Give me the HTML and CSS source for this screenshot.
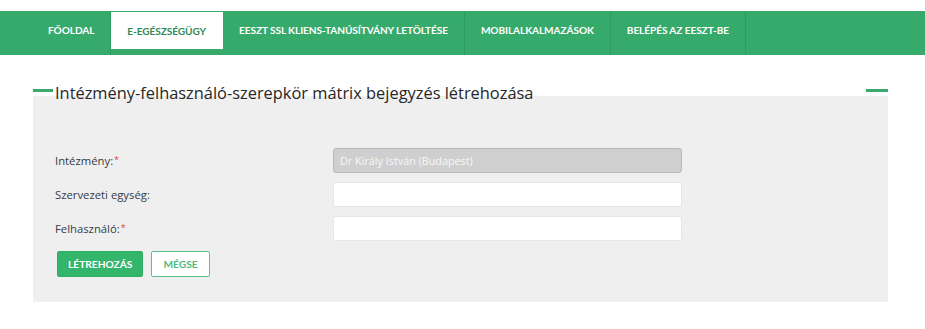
FILE: index.html
```html
<!DOCTYPE html>
<html lang="hu">
<head>
<meta charset="utf-8">
<title>Intézmény-felhasználó-szerepkör mátrix</title>
<link rel="stylesheet" href="styles.css">
</head>
<body>
<nav class="topnav">
  <ul class="menu">
    <li class="item">FŐOLDAL</li>
    <li class="item active">E-EGÉSZSÉGÜGY</li>
    <li class="item">EESZT SSL KLIENS-TANÚSÍTVÁNY LETÖLTÉSE</li>
    <li class="item">MOBILALKALMAZÁSOK</li>
    <li class="item">BELÉPÉS AZ EESZT-BE</li>
  </ul>
</nav>
<main class="panel">
  <div class="panel-head">
    <span class="rule rule-left"></span>
    <h1 class="title">Intézmény-felhasználó-szerepkör mátrix bejegyzés létrehozása</h1>
    <span class="spacer"></span>
    <span class="rule rule-right"></span>
  </div>
  <form class="form">
    <div class="row">
      <label class="label">Intézmény:<span class="req">*</span></label>
      <input class="field disabled" type="text" value="Dr Király István (Budapest)" disabled>
    </div>
    <div class="row">
      <label class="label">Szervezeti egység:</label>
      <input class="field" type="text">
    </div>
    <div class="row">
      <label class="label">Felhasználó:<span class="req">*</span></label>
      <input class="field" type="text">
    </div>
    <div class="actions">
      <button class="btn btn-primary" type="button">LÉTREHOZÁS</button>
      <button class="btn btn-outline" type="button">MÉGSE</button>
    </div>
  </form>
</main>
</body>
</html>
```
FILE: styles.css
```css
html, body {
  margin: 0;
  padding: 0;
  background: #ffffff;
}
body {
  font-family: "Open Sans", "DejaVu Sans", sans-serif;
  color: #333333;
}
.topnav {
  margin-top: 11px;
  height: 44px;
  background: #36aa6a;
}
.menu {
  list-style: none;
  margin: 0;
  padding: 0 0 0 32px;
  display: flex;
  height: 100%;
}
.item {
  display: flex;
  align-items: center;
  padding: 0 16px 6px;
  height: 100%;
  box-sizing: border-box;
  border-right: 1px solid #2f9b5e;
  color: #ffffff;
  font-family: Lato, "Open Sans", sans-serif;
  font-weight: 700;
  font-size: 10.1px;
  letter-spacing: -0.08px;
  white-space: nowrap;
}
.item.active {
  background: #ffffff;
  color: #2f8a58;
  border-right-color: #ffffff;
  margin-top: 1px;
  height: 37px;
  padding-bottom: 0;
}
.panel {
  margin: 25px 37px 0 33px;
  background: linear-gradient(to bottom, #ffffff 16px, #efefef 16px);
  padding-bottom: 25px;
}
.panel-head {
  display: flex;
  align-items: center;
  height: 22px;
}
.rule {
  height: 3px;
  background: #3aa96b;
  flex: none;
  margin-top: -2px;
}
.rule-left { width: 20px; margin-right: 2px; }
.rule-right { width: 22px; }
.spacer { flex: 1; }
.title {
  margin: 0;
  padding-top: 3px;
  font-size: 16.4px;
  font-weight: 400;
  line-height: 22px;
  color: #262626;
  white-space: nowrap;
}
.form {
  padding: 46px 0 0 22px;
}
.row {
  display: flex;
  align-items: center;
  margin-bottom: 9px;
}
.label {
  width: 278px;
  flex: none;
  font-size: 11.3px;
  color: #363b45;
}
.req {
  color: #e0403a;
  font-size: 9px;
  vertical-align: 2px;
  margin-left: 1px;
}
.field {
  width: 349px;
  height: 25px;
  box-sizing: border-box;
  margin: 0;
  border: 1px solid #e6e6e6;
  border-radius: 2px;
  background: #ffffff;
  padding: 0 6px;
  font-family: "Open Sans", sans-serif;
  font-size: 10.8px;
  outline: none;
}
.field.disabled {
  background: #cfcfcf;
  border-color: #b9b9b9;
  color: #f7f7f7;
  border-radius: 3px;
}
.actions {
  display: flex;
  gap: 8px;
  margin-top: 10px;
  padding-left: 2px;
}
.btn {
  height: 26px;
  box-sizing: border-box;
  border-radius: 2px;
  font-family: Lato, "Open Sans", sans-serif;
  font-weight: 700;
  font-size: 10.2px;
  padding: 0 10px;
  cursor: pointer;
  margin: 0;
}
.btn-primary {
  background: #33b56b;
  border: 1px solid #2fae66;
  color: #ffffff;
}
.btn-outline {
  background: #ffffff;
  border: 1px solid #5cc08a;
  color: #4fba7f;
  padding: 0 11px;
}
```
